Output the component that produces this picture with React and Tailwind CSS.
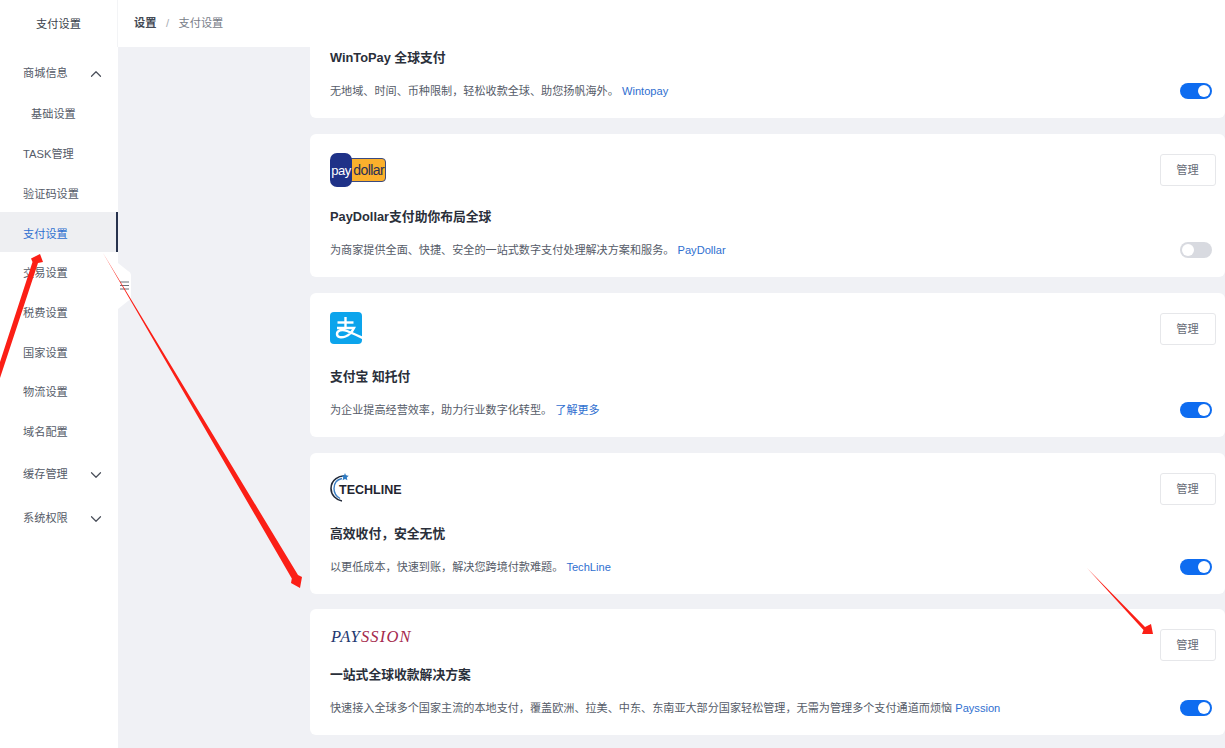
import React from "react";
import { ChevronUp, ChevronDown } from "lucide-react";

const FONT = { fontFamily: '"Liberation Sans", "Noto Sans CJK SC", sans-serif' };

function Toggle({ on }) {
  return (
    <div className={`flex h-4 w-8 items-center rounded-full p-[2px] ${on ? "justify-end bg-[#0e6cf0]" : "justify-start bg-[#d8dae0]"}`}>
      <div className="h-3 w-3 rounded-full bg-white" />
    </div>
  );
}

function PayDollarLogo() {
  return (
    <div className="relative flex h-[34px] w-14 items-center">
      <div className="absolute left-[9px] top-[5px] flex h-[24px] w-[47px] items-center justify-end rounded-[4px] border border-[#3a4a80] bg-[#fbb02c] pr-[1px] text-[14px] leading-none tracking-[-0.6px] text-[#2a2f55]">dollar</div>
      <div className="absolute left-0 top-0 flex h-[34px] w-[22px] items-center justify-center rounded-[7px] bg-[#1f3288] text-[13px] leading-none tracking-[-0.5px] text-white">pay</div>
    </div>
  );
}

function AlipayLogo() {
  return (
    <svg width="32" height="32" viewBox="0 0 32 32" className="mb-[3px] block">
      <rect width="32" height="32" rx="4" fill="#0ca4ec" />
      <g fill="none" stroke="#fff" strokeWidth="2.4">
        <path d="M7.500 10.500h16" />
        <path d="M15.500 5v11" />
        <path d="M7 16h17c-2 4-4.500 7-8.500 8.500-4 1.500-8.500 1-8.500-2.500s5-5 10-3c3 1.200 10 4 15.500 7" />
      </g>
    </svg>
  );
}

function TechlineLogo() {
  return (
    <div className="relative flex h-8 w-[74px] items-center">
      <svg width="24" height="32" viewBox="0 0 24 32" className="absolute left-0 top-0">
        <path d="M17 4.500C9 2.500 1 8 1 16.500 1 23 6 28 12 29" fill="none" stroke="#222a3a" strokeWidth="1.600" />
        <path d="M12 6.500C7 7.500 4 11.500 4 16.500 4 21 6.500 24.500 10 26.500" fill="none" stroke="#3c7fc4" strokeWidth="1.400" />
        <path d="M15 1l1 2.500 2.800.3-2 1.800.6 2.700-2.400-1.400-2.400 1.400.6-2.700-2-1.800 2.800-.3z" fill="#2f7cc4" />
      </svg>
      <span className="absolute left-[9px] top-[10px] text-[12.5px] font-bold leading-[16px] text-[#1f2430]">TECHLINE</span>
    </div>
  );
}

function PayssionLogo() {
  return (
    <div className="mt-px h-4 whitespace-nowrap pl-px text-[16.5px] italic leading-4 tracking-[1.2px]" style={{ fontFamily: '"Liberation Serif", serif' }}>
      <span className="text-[#23386f]">PAY</span>
      <span className="text-[#a52a4d]">SSION</span>
    </div>
  );
}

function Card({ logoHeight, logo, title, desc, link, on, manage, className = "" }) {
  return (
    <section className={`relative shrink-0 rounded-md bg-white pb-[17px] pl-5 pr-[13px] pt-[19px] ${className}`}>
      {manage && (
        <button className="absolute right-[9px] top-5 h-8 w-14 rounded-[3px] border border-[#e6e7ea] bg-white pr-px text-[11.2px] text-[#666b76]">管理</button>
      )}
      <div className={logoHeight}>{logo}</div>
      <h3 className="mt-[19px] text-[12.8px] font-bold leading-[22px] text-[#2a2f3a]">{title}</h3>
      <div className="mt-3 flex h-5 items-center justify-between">
        <p className="text-[11.12px] leading-5 text-[#555b68]">
          {desc} <span className="text-[#2f6fd0]">{link}</span>
        </p>
        <Toggle on={on} />
      </div>
    </section>
  );
}

function MenuItem({ label, active, indent, tall, chevron }) {
  return (
    <div className={`flex items-center justify-between pr-[13px] text-[11.2px] ${tall ? "h-11 pt-[5px]" : "h-[39.7px] pt-1"} ${indent ? "pl-[31px]" : "pl-[23px]"} ${active ? "border-r-2 border-[#27324d] bg-[#eeeff2] text-[#2f6fd0]" : "text-[#555b68]"}`}>
      <span>{label}</span>
      {chevron === "up" && <ChevronUp size={18} strokeWidth={1.6} className="text-[#4a4f5a]" />}
      {chevron === "down" && <ChevronDown size={18} strokeWidth={1.6} className="text-[#4a4f5a]" />}
    </div>
  );
}

export default function App() {
  return (
    <div className="relative flex h-[748px] w-[1225px] flex-col overflow-hidden bg-[#f0f1f5]" style={FONT}>
      <header className="z-10 flex h-[47px] shrink-0 bg-white">
        <div className="flex w-[118px] items-center justify-center border-r border-[#f3f4f6] pt-px text-[11.2px] text-[#3a3f4a]">支付设置</div>
        <div className="flex items-center pb-px pl-4 text-[11.2px]">
          <span className="font-bold text-[#444a55]">设置</span>
          <span className="mx-[9.5px] text-[#a8acb4]">/</span>
          <span className="text-[#787d88]">支付设置</span>
        </div>
      </header>
      <div className="flex min-h-0 flex-1">
        <aside className="relative w-[118px] shrink-0 bg-white pt-[2px]">
          <MenuItem label="商城信息" tall chevron="up" />
          <MenuItem label="基础设置" indent />
          <MenuItem label="TASK管理" />
          <MenuItem label="验证码设置" />
          <MenuItem label="支付设置" active />
          <MenuItem label="交易设置" />
          <MenuItem label="税费设置" />
          <MenuItem label="国家设置" />
          <MenuItem label="物流设置" />
          <MenuItem label="域名配置" />
          <MenuItem label="缓存管理" tall chevron="down" />
          <MenuItem label="系统权限" tall chevron="down" />
          <svg width="14" height="46" viewBox="0 0 14 46" className="absolute left-[118px] top-[216px]">
            <path d="M0 0l10 8q3 1 3 5v20q0 4-3 5L0 46z" fill="#fff" />
            <path d="M2 19h9M2 22.500h9M2 26h9" stroke="#6b7078" strokeWidth="1" />
          </svg>
        </aside>
        <main className="flex min-w-0 flex-1 flex-col gap-4 overflow-hidden pl-[192px]">
          <Card className="-mt-[72px]" logoHeight="h-[34px]" title="WinToPay 全球支付" desc="无地域、时间、币种限制，轻松收款全球、助您扬帆海外。" link="Wintopay" on />
          <Card logoHeight="h-[34px]" logo={<PayDollarLogo />} title="PayDollar支付助你布局全球" desc="为商家提供全面、快捷、安全的一站式数字支付处理解决方案和服务。" link="PayDollar" manage />
          <Card logoHeight="h-[35px]" logo={<AlipayLogo />} title="支付宝 知托付" desc="为企业提高经营效率，助力行业数字化转型。" link="了解更多" on manage />
          <Card logoHeight="h-8" logo={<TechlineLogo />} title="高效收付，安全无忧" desc="以更低成本，快速到账，解决您跨境付款难题。" link="TechLine" on manage />
          <Card className="-mt-px" logoHeight="h-4" logo={<PayssionLogo />} title="一站式全球收款解决方案" desc="快速接入全球多个国家主流的本地支付，覆盖欧洲、拉美、中东、东南亚大部分国家轻松管理，无需为管理多个支付通道而烦恼" link="Payssion" on manage />
        </main>
      </div>
      <svg width="1225" height="748" viewBox="0 0 1225 748" className="pointer-events-none absolute left-0 top-0 z-20">
        <path d="M0 362L32.500 262 31 258.500 40 254 43 262 38 263 0 378z" fill="#fb1f16" />
        <path d="M103 253L291.800 578.500 291 583 300 588 302 577 298 575z" fill="#fb1f16" />
        <path d="M1087 568L1145 627 1151 624 1153 634 1142 634 1143.500 630z" fill="#fb1f16" />
      </svg>
    </div>
  );
}
